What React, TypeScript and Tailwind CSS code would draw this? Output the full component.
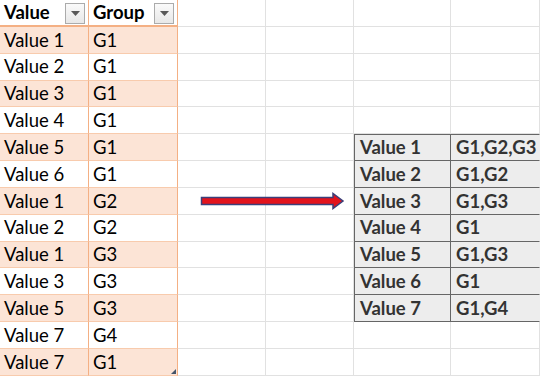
import React from 'react';

// ──────────────────────────────────────────────
// SHEET DATA
// ──────────────────────────────────────────────

const colWidths = [89, 89, 88, 88, 97, 89];
const ROWS = 14;

const source: [string, string][] = [
  ['Value 1', 'G1'],
  ['Value 2', 'G1'],
  ['Value 3', 'G1'],
  ['Value 4', 'G1'],
  ['Value 5', 'G1'],
  ['Value 6', 'G1'],
  ['Value 1', 'G2'],
  ['Value 2', 'G2'],
  ['Value 1', 'G3'],
  ['Value 3', 'G3'],
  ['Value 5', 'G3'],
  ['Value 7', 'G4'],
  ['Value 7', 'G1'],
];

const result: [string, string][] = [
  ['Value 1', 'G1,G2,G3'],
  ['Value 2', 'G1,G2'],
  ['Value 3', 'G1,G3'],
  ['Value 4', 'G1'],
  ['Value 5', 'G1,G3'],
  ['Value 6', 'G1'],
  ['Value 7', 'G1,G4'],
];

const RESULT_TOP = 5;
const RESULT_LEFT = 4;

function FilterButton() {
  return (
    <span className="absolute right-[3px] top-[3px] w-[20px] h-[21px] border border-[#ababab] bg-gradient-to-b from-[#fafafa] to-[#e8e8e8] flex items-center justify-center">
      <svg width="9" height="5" viewBox="0 0 9 5">
        <path d="M0 0 L9 0 L4.5 5 Z" fill="#595959" />
      </svg>
    </span>
  );
}

function Cell({ row, col }: { row: number; col: number }) {
  // left table (Excel table style, orange)
  if (col < 2) {
    const isHeader = row === 0;
    const banded = !isHeader && row % 2 === 1;
    const text = isHeader ? (col === 0 ? 'Value' : 'Group') : source[row - 1][col];
    const last = row === ROWS - 1;
    return (
      <div
        className={`relative flex items-center pl-[4px] text-[18.5px] text-black border-r border-r-[#f4b084] ${
          isHeader ? 'font-bold bg-white border-b-2 border-b-[#f4b084]' : 'border-b border-b-[#f8cbad]'
        } ${banded ? 'bg-[#fce4d6]' : 'bg-white'}`}
      >
        <span className="leading-none">{text}</span>
        {isHeader && <FilterButton />}
        {last && col === 1 && (
          <svg className="absolute right-[1px] bottom-[1px]" width="5" height="5" viewBox="0 0 5 5">
            <path d="M5 0 L5 5 L0 5 Z" fill="#44546a" />
          </svg>
        )}
      </div>
    );
  }

  // result table (grey, bold)
  const r = row - RESULT_TOP;
  const c = col - RESULT_LEFT;
  if (r >= 0 && r < result.length && c >= 0) {
    return (
      <div
        className={`flex items-center pl-[5px] text-[18.5px] font-bold text-[#333] bg-[#ededed] border-b border-b-[#666] ${
          c === 0 ? 'border-l border-l-[#666] border-r border-r-[#666]' : 'border-r border-r-[#ededed]'
        } ${r === 0 ? 'border-t border-t-[#666]' : ''}`}
      >
        <span className="leading-none">{result[r][c]}</span>
      </div>
    );
  }

  return <div className="border-r border-b border-[#e1e1e1] bg-white" />;
}

export default function App() {
  return (
    <div
      className="relative w-[540px] h-[376px] overflow-hidden bg-white"
      style={{ fontFamily: 'Lato, "Open Sans", sans-serif' }}
    >
      <div
        className="grid"
        style={{
          gridTemplateColumns: colWidths.map((w) => `${w}px`).join(' '),
          gridTemplateRows: `repeat(${ROWS}, 26.85px)`,
        }}
      >
        {Array.from({ length: ROWS }).map((_, row) =>
          colWidths.map((_, col) => <Cell key={`${row}-${col}`} row={row} col={col} />)
        )}
      </div>

      {/* arrow */}
      <svg className="absolute left-[200px] top-[192px]" width="145" height="18" viewBox="0 0 145 18">
        <path
          d="M1.5 5.5 L133 5.5 L133 1.5 L143 9 L133 16.5 L133 12.5 L1.5 12.5 Z"
          fill="#e3131c"
          stroke="#3b3f7a"
          strokeWidth="1.5"
          strokeLinejoin="miter"
        />
      </svg>
    </div>
  );
}
